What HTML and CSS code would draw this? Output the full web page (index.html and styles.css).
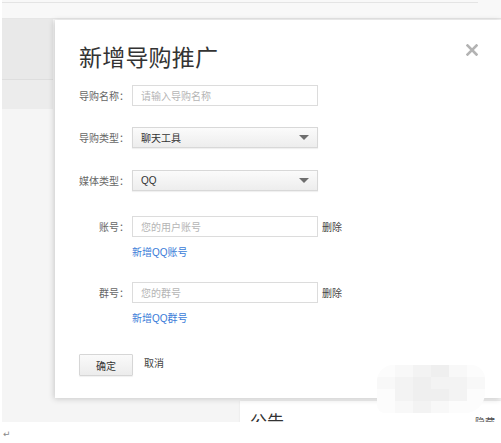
FILE: index.html
```html
<!DOCTYPE html>
<html lang="zh-CN">
<head>
<meta charset="utf-8">
<title>新增导购推广</title>
<link rel="stylesheet" href="styles.css">
</head>
<body>
<div class="screen">
  <div class="topbar"><div class="topline"></div></div>
  <div class="page">
    <div class="sidebar">
      <div class="side-a"></div>
      <div class="side-b"></div>
    </div>
    <div class="content">
      <div class="card">
        <span class="card-title">公告</span>
        <span class="card-hide">隐藏</span>
      </div>
    </div>
  </div>

  <div class="modal">
    <h1 class="title">新增导购推广</h1>
    <span class="close">
      <svg width="12" height="12" viewBox="0 0 12 12"><path d="M1.5 1.5 L10.5 10.5 M10.5 1.5 L1.5 10.5" stroke="#b3b3b3" stroke-width="2.6" stroke-linecap="square"/></svg>
    </span>

    <div class="row r1">
      <label class="label">导购名称：</label>
      <div class="input"><span class="ph">请输入导购名称</span></div>
    </div>
    <div class="row r2">
      <label class="label">导购类型：</label>
      <div class="select"><span class="val">聊天工具</span><span class="arrow"></span></div>
    </div>
    <div class="row r3">
      <label class="label">媒体类型：</label>
      <div class="select"><span class="val">QQ</span><span class="arrow"></span></div>
    </div>
    <div class="row r4">
      <label class="label">账号：</label>
      <div class="input"><span class="ph">您的用户账号</span></div>
      <span class="del">删除</span>
    </div>
    <div class="linkrow l1"><a class="link">新增QQ账号</a></div>
    <div class="row r5">
      <label class="label">群号：</label>
      <div class="input"><span class="ph">您的群号</span></div>
      <span class="del">删除</span>
    </div>
    <div class="linkrow l2"><a class="link">新增QQ群号</a></div>
    <div class="actions">
      <button class="btn">确定</button>
      <span class="cancel">取消</span>
    </div>
  </div>

  <div class="mosaic">
    <i class="m1"></i><i class="m2"></i><i class="m3"></i><i class="m4"></i><i class="m2"></i><i class="m1"></i>
    <i class="m2"></i><i class="m3"></i><i class="m4"></i><i class="m3"></i><i class="m3"></i><i class="m2"></i>
    <i class="m1"></i><i class="m3"></i><i class="m4"></i><i class="m4"></i><i class="m3"></i><i class="m1"></i>
    <i class="m1"></i><i class="m2"></i><i class="m3"></i><i class="m2"></i><i class="m1"></i><i class="m1"></i>
  </div>
</div>
<div class="para">↵</div>
</body>
</html>
```
FILE: styles.css
```css
html, body {
  margin: 0;
  padding: 0;
  background: #ffffff;
}
body {
  font-family: "Liberation Sans", "Noto Sans CJK SC", sans-serif;
  font-size: 10px;
  color: #666;
}
.screen {
  position: relative;
  margin-left: 2px;
  width: 499px;
  height: 422px;
  background: #f5f5f5;
  overflow: hidden;
}
.topbar {
  height: 19px;
  padding-top: 2px;
  box-sizing: border-box;
  background: #f8f8f8;
  border-bottom: 1px solid #e6e6e6;
}
.topline {
  width: 476px;
  height: 1px;
  background: #e4e4e4;
}
.page {
  display: flex;
  height: 402px;
}
.sidebar {
  width: 51px;
  display: flex;
  flex-direction: column;
}
.side-a {
  height: 60px;
  background: #e9e9e9;
  border-bottom: 1px solid #dedede;
}
.side-b {
  height: 29px;
  background: #ececec;
}
.content {
  flex: 1;
  display: flex;
  flex-direction: column;
  padding-left: 187px;
  padding-top: 382px;
}
.card {
  flex: 1;
  background: #ffffff;
  box-shadow: 0 0 2px rgba(0,0,0,0.08);
  display: flex;
  justify-content: space-between;
  align-items: flex-start;
  padding: 13px 6px 0 10px;
}
.card-title {
  font-size: 17px;
  line-height: 17px;
  color: #333;
}
.card-hide {
  font-size: 10px;
  line-height: 10px;
  margin-top: 4px;
  color: #555;
}

.modal {
  position: absolute;
  left: 53px;
  top: 20px;
  right: 0;
  height: 378px;
  box-sizing: border-box;
  background: #ffffff;
  box-shadow: -1px 1px 6px rgba(0,0,0,0.18);
  padding: 26px 0 0 24px;
  display: flex;
  flex-direction: column;
}
.title {
  margin: 0;
  font-size: 23px;
  line-height: 24px;
  font-weight: normal;
  color: #333;
  letter-spacing: 0.2px;
}
.close {
  position: absolute;
  left: 411px;
  top: 24px;
  width: 12px;
  height: 12px;
  display: block;
}
.close svg { display: block; }

.row {
  display: flex;
  align-items: center;
  height: 21px;
}
.label {
  width: 50px;
  margin-right: 3px;
  text-align: right;
  color: #666;
  white-space: nowrap;
  font-size: 10px;
}
.input, .select {
  width: 186px;
  height: 21px;
  box-sizing: border-box;
  border: 1px solid #dcdcdc;
  display: flex;
  align-items: center;
  padding-left: 8px;
  position: relative;
}
.input {
  background: #fff;
}
.ph {
  color: #b5b5b5;
  font-size: 10px;
}
.select {
  background: linear-gradient(#fbfbfb, #ededed);
  border-color: #d8d8d8;
  box-shadow: 0 1px 1px rgba(0,0,0,0.06);
  justify-content: space-between;
  padding-right: 8px;
}
.val {
  color: #333;
  font-size: 10px;
}
.arrow {
  width: 0;
  height: 0;
  border-left: 5px solid transparent;
  border-right: 5px solid transparent;
  border-top: 5px solid #6e6e6e;
}
.del {
  margin-left: 4px;
  color: #444;
  font-size: 10px;
}
.r1 { margin-top: 15px; }
.r2 { margin-top: 21px; }
.r3 { margin-top: 22px; }
.r4 { margin-top: 25px; }
.r5 { margin-top: 22px; }
.linkrow {
  margin-top: 9px;
  padding-left: 53px;
  height: 14px;
  line-height: 14px;
}
.link {
  color: #3a7cd8;
  font-size: 10px;
  text-decoration: none;
}
.actions {
  margin-top: 28px;
  display: flex;
  align-items: flex-start;
}
.btn {
  width: 54px;
  height: 22px;
  box-sizing: border-box;
  border: 1px solid #d6d6d6;
  border-radius: 1px;
  background: linear-gradient(#fafafa, #ececec);
  box-shadow: 0 1px 1px rgba(0,0,0,0.06);
  font-family: "Liberation Sans", "Noto Sans CJK SC", sans-serif;
  font-size: 10px;
  color: #333;
  padding: 0;
  margin: 0;
}
.cancel {
  margin-left: 11px;
  margin-top: 3px;
  line-height: 14px;
  color: #444;
  font-size: 10px;
}

.mosaic {
  position: absolute;
  left: 375px;
  top: 365px;
  width: 108px;
  height: 48px;
  display: grid;
  grid-template-columns: repeat(6, 18px);
  grid-template-rows: repeat(4, 12px);
  border-radius: 16px 14px 20px 8px;
  overflow: hidden;
  filter: blur(0.6px);
}
.mosaic i { display: block; }
.m1 { background: #fcfcfc; }
.m2 { background: #f8f8f8; }
.m3 { background: #f3f3f3; }
.m4 { background: #efefef; }

.para {
  height: 21px;
  padding-left: 3px;
  font-family: "DejaVu Sans", sans-serif;
  font-size: 9px;
  line-height: 24px;
  color: #888;
}
```
